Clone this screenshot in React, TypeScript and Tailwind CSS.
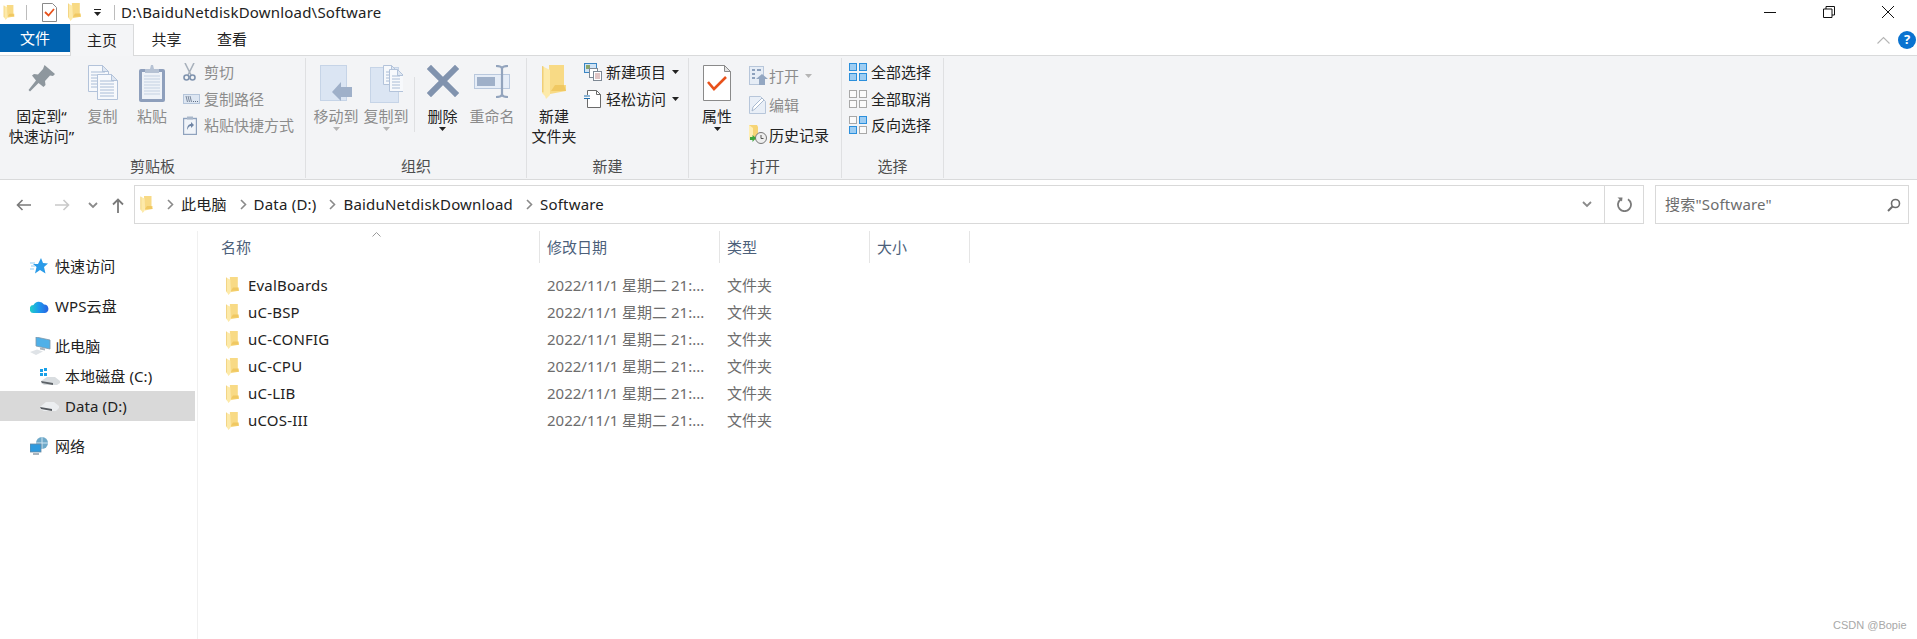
import React from "react";

const gray = "text-[#8c8c8c]";

function Folder({ w = 13, h = 16 }: { w?: number; h?: number }) {
  return (
    <svg width={w} height={h} viewBox="0 0 24 34" className="shrink-0">
      <path d="M7 0h15v20h2v6L8 29z" fill="#f8da85" />
      <path d="M13 20h9l2 6H9z" fill="#f0c862" />
      <path d="M0 1l8 4v25l-4 4-1-3-3-3z" fill="#fdeaa9" />
      <path d="M0 1l1.500 .5v26L0 27z" fill="#f0cf79" />
    </svg>
  );
}

function Pin() {
  return (
    <svg width="27" height="27" viewBox="0 0 27 27">
      <path d="M16.500 0l10.500 9-2 2-3-.5-5 5.500 .5 4-2 2-5-4-8.500 8.500-1.500-1.500 7.500-9.500-4-5 2-1.500 4 .5 5-5.500z" fill="#8e979e" />
    </svg>
  );
}

function Pages({ x = 0, y = 0, w = 20, h = 25 }: { x?: number; y?: number; w?: number; h?: number }) {
  const lines = [];
  for (let i = 7; i < h - 2; i += 3) lines.push(<path key={i} d={`M${x + 3} ${y + i}h${w - 6}`} stroke="#a9bcd6" />);
  return (
    <g>
      <path d={`M${x + 0.5} ${y + 0.5}h${w - 6}l6 6v${h - 7}h-${w}z`} fill="#f7f9fc" stroke="#b3c3da" />
      <path d={`M${x + w - 5.5} ${y + 0.5}v6h6z`} fill="#dfe7f2" stroke="#b3c3da" />
      {lines}
    </g>
  );
}

function CopyIcon() {
  return (
    <svg width="30" height="36" viewBox="0 0 30 36">
      <Pages x={0} y={0} w={20} h={27} />
      <Pages x={9} y={9} w={20} h={26} />
    </svg>
  );
}

function Clipboard() {
  return (
    <svg width="26" height="37" viewBox="0 0 26 37">
      <rect x="0" y="4" width="26" height="33" rx="2" fill="#8e9fbc" />
      <rect x="3" y="7" width="20" height="27" fill="#eef2f8" />
      <path d="M5 11h16M5 14h16M5 17h16M5 20h16M5 23h16M5 26h16M5 29h16" stroke="#c4d1e2" />
      <path d="M6 8V4h5l1-4h2l1 4h5v4z" fill="#b6c2d4" />
    </svg>
  );
}

function Scissors() {
  return (
    <svg width="13" height="18" viewBox="0 0 13 18" fill="none">
      <path d="M2 0l6 12M11 0L5 12" stroke="#a8b1bc" strokeWidth="1.6" />
      <circle cx="3.500" cy="14.500" r="2.500" stroke="#7f93ae" strokeWidth="1.6" />
      <circle cx="9.500" cy="14.500" r="2.500" stroke="#7f93ae" strokeWidth="1.6" />
    </svg>
  );
}

function PathBox() {
  return (
    <svg width="17" height="10" viewBox="0 0 17 10">
      <rect x="0.5" y="0.5" width="16" height="9" fill="#dde6f2" stroke="#b5c5da" />
      <path d="M3 2l1.500 6M5 2l1.500 6M7 2l1.500 6" stroke="#5f6f85" strokeWidth="0.8" />
      <path d="M10 7.500h1M12 7.500h1M14 7.500h1" stroke="#5f6f85" />
    </svg>
  );
}

function Shortcut() {
  return (
    <svg width="14" height="19" viewBox="0 0 14 19">
      <rect x="0.5" y="2.5" width="13" height="16" fill="#f0f4f9" stroke="#8fa2bd" strokeWidth="1.4" />
      <rect x="4" y="0.5" width="6" height="3" fill="#a9b7ca" />
      <path d="M4 14c0-4 2-6 4-6V6l3 3-3 3v-2c-2 0-3 2-4 4z" fill="#6f85a5" />
    </svg>
  );
}

function MoveTo() {
  return (
    <svg width="32" height="36" viewBox="0 0 32 36">
      <rect x="0.5" y="0.5" width="26" height="35" fill="#dbe5f3" stroke="#c6d4e7" />
      <path d="M12 27l9-10v5h11v10H21v4z" fill="#9fb0c9" />
    </svg>
  );
}

function CopyTo() {
  return (
    <svg width="33" height="38" viewBox="0 0 33 38">
      <rect x="0.5" y="2.5" width="28" height="35" fill="#dbe5f3" stroke="#c6d4e7" />
      <Pages x={13} y={0} w={14} h={20} />
      <Pages x={19} y={4} w={14} h={23} />
    </svg>
  );
}

function DeleteX() {
  return (
    <svg width="32" height="32" viewBox="0 0 32 32">
      <path d="M4 4l24 24M28 4L4 28" stroke="#8193ae" strokeWidth="6" strokeLinecap="square" />
    </svg>
  );
}

function Rename() {
  return (
    <svg width="36" height="33" viewBox="0 0 36 33" fill="none">
      <rect x="0.5" y="9.5" width="35" height="14" fill="#e6edf7" stroke="#b9c8dd" />
      <rect x="3" y="12" width="18" height="9" fill="#9fb0c9" />
      <path d="M22 1c4 0 6 1 6 3v25c0 2 2 3 6 3M34 1c-4 0-6 1-6 3v25c0 2-2 3-6 3" stroke="#93a4bd" strokeWidth="2.2" />
    </svg>
  );
}

function NewItem() {
  return (
    <svg width="18" height="18" viewBox="0 0 18 18">
      <rect x="0.5" y="0.5" width="12" height="9" fill="#cfe3f5" stroke="#3a86c4" />
      <rect x="2" y="2" width="4" height="4" fill="#8aa56c" />
      <rect x="5.5" y="5.5" width="8" height="9" fill="#fff" stroke="#7d8894" />
      <rect x="9.5" y="8.5" width="8" height="9" fill="#fff" stroke="#7d8894" />
      <path d="M11 11h5M11 13h5M11 15h5" stroke="#c28a8a" />
    </svg>
  );
}

function EasyAccess() {
  return (
    <svg width="17" height="18" viewBox="0 0 17 18" fill="none">
      <path d="M3.500 5V0.500h9l4 4v13h-13V9" fill="#fff" stroke="#6a6a6a" />
      <path d="M12.500 0.500v4h4" stroke="#6a6a6a" />
      <path d="M0 6h6M0 8.500h6" stroke="#1f6fae" strokeWidth="1.2" />
    </svg>
  );
}

function Properties() {
  return (
    <svg width="28" height="36" viewBox="0 0 28 36" fill="none">
      <path d="M0.500 0.500h21l6 6v29h-27z" fill="#fff" stroke="#8a8a8a" />
      <path d="M21.500 0.500v6h6z" fill="#e3e3e3" stroke="#8a8a8a" />
      <path d="M5 17l6 7L23 12" stroke="#e8511a" strokeWidth="2.6" />
    </svg>
  );
}

function OpenIcon() {
  return (
    <svg width="19" height="19" viewBox="0 0 19 19">
      <rect x="0.5" y="0.5" width="14" height="18" fill="#e6edf6" stroke="#b7c6da" />
      <path d="M3 4h3M3 8h3M3 12h3M8 4h4" stroke="#8da1bd" strokeWidth="2" />
      <path d="M13 8l6 5h-3v6h-6v-6H7z" fill="#93a7c2" />
    </svg>
  );
}

function EditIcon() {
  return (
    <svg width="17" height="18" viewBox="0 0 17 18" fill="none">
      <path d="M0.500 0.500h11l5 5v12h-16z" fill="#e9eff7" stroke="#b7c6da" />
      <path d="M3 15l1-4L13 2l2 2-9 9z" fill="#fff" stroke="#a9bad0" />
    </svg>
  );
}

function HistoryIcon() {
  return (
    <svg width="18" height="19" viewBox="0 0 18 19">
      <path d="M0 0h8l1 2v13H0z" fill="#f6d475" />
      <path d="M0 0l4 3v12H0z" fill="#ffeeb4" />
      <circle cx="12" cy="13" r="5.500" fill="#eee" stroke="#777" />
      <path d="M12 10v3.500h2.500" stroke="#555" fill="none" />
      <path d="M7 13l-3.500-3v2H1v3h2.500v2z" fill="#3da63d" />
    </svg>
  );
}

function Grid({ on }: { on: boolean[] }) {
  const cells = [
    [0, 0],
    [10, 0],
    [0, 10],
    [10, 10],
  ];
  return (
    <svg width="18" height="18" viewBox="0 0 18 18">
      {cells.map(([x, y], i) => (
        <rect
          key={i}
          x={x + 0.5}
          y={y + 0.5}
          width="7"
          height="7"
          fill={on[i] ? "#9dcdf3" : "#fbfbfb"}
          stroke={on[i] ? "#2b8fdc" : "#a8a8a8"}
        />
      ))}
    </svg>
  );
}

function Caret({ light = false, cls = "" }: { light?: boolean; cls?: string }) {
  return (
    <svg width="7" height="4" viewBox="0 0 7 4" className={cls}>
      <path d="M0 0h7L3.500 4z" fill={light ? "#b5b5b5" : "#222"} />
    </svg>
  );
}

function Large({
  w,
  icon,
  lines,
  dim = false,
  caret,
}: {
  w: string;
  icon: React.ReactNode;
  lines: string[];
  dim?: boolean;
  caret?: "dark" | "light";
}) {
  return (
    <div className={`${w} flex flex-col items-center shrink-0`}>
      <div className="h-[48px] pt-[7px] flex items-start justify-center">{icon}</div>
      {lines.map((l) => (
        <div key={l} className={`leading-[20px] whitespace-nowrap ${dim ? gray : "text-[#222]"}`}>
          {l}
        </div>
      ))}
      {caret && <Caret light={caret === "light"} cls="mt-[1px]" />}
    </div>
  );
}

function Small({
  icon,
  text,
  iw,
  h,
  dim = false,
  after,
}: {
  icon: React.ReactNode;
  text: string;
  iw: string;
  h: string;
  dim?: boolean;
  after?: React.ReactNode;
}) {
  return (
    <div className={`${h} flex items-center whitespace-nowrap`}>
      <div className={`${iw} shrink-0 flex items-center`}>{icon}</div>
      <span className={dim ? gray : "text-[#222]"}>{text}</span>
      {after}
    </div>
  );
}

function Group({ w, label, children }: { w: string; label: string; children: React.ReactNode }) {
  return (
    <div className={`${w} shrink-0 h-[120px] mt-[2px] border-r border-[#dfe0e2] flex flex-col`}>
      <div className="h-[98px] flex">{children}</div>
      <div className="leading-[20px] text-center text-[#4d4d4d]">{label}</div>
    </div>
  );
}

function Chevron({ cls = "" }: { cls?: string }) {
  return (
    <svg width="7" height="11" viewBox="0 0 7 11" className={`shrink-0 ${cls}`} fill="none">
      <path d="M1 1l4.500 4.500L1 10" stroke="#8a8a8a" strokeWidth="1.6" />
    </svg>
  );
}

function DownChev({ cls = "" }: { cls?: string }) {
  return (
    <svg width="10" height="7" viewBox="0 0 10 7" className={`shrink-0 ${cls}`} fill="none">
      <path d="M1 1l4 4 4-4" stroke="#8a8a8a" strokeWidth="1.8" />
    </svg>
  );
}

function NavArrow({ dir, color }: { dir: "l" | "r"; color: string }) {
  return (
    <svg width="15" height="12" viewBox="0 0 15 12" className="shrink-0" fill="none">
      <path
        d={dir === "l" ? "M15 6H1.500M6.500 1l-5 5 5 5" : "M0 6h13.500M8.500 1l5 5-5 5"}
        stroke={color}
        strokeWidth="1.6"
      />
    </svg>
  );
}

function Star() {
  return (
    <svg width="18" height="16" viewBox="0 0 18 16">
      <path d="M11 0l2 5 5 .5-4 3.500 1.500 6.500L10 12l-5 3.500L6.500 9 3 6h5z" fill="#2a9be8" />
      <path d="M0 5h5M1 8h4M0 11h4" stroke="#8fcdf5" />
    </svg>
  );
}

function Cloud() {
  return (
    <svg width="19" height="14" viewBox="0 0 19 14">
      <defs>
        <linearGradient id="cl" x1="0" y1="0" x2="1" y2="0">
          <stop offset="0" stopColor="#21d1c6" />
          <stop offset="0.5" stopColor="#1c97ee" />
          <stop offset="1" stopColor="#2a62e0" />
        </linearGradient>
      </defs>
      <path d="M4 14a4 4 0 0 1-.5-8A6 6 0 0 1 14 5.500 4.300 4.300 0 0 1 15 14z" fill="url(#cl)" />
    </svg>
  );
}

function PC() {
  return (
    <svg width="21" height="18" viewBox="0 0 21 18">
      <path d="M6 0l14 3v9L6 9z" fill="#4fb0e8" stroke="#7f97aa" strokeWidth="0.8" />
      <path d="M10 10.500l5 1v2l-5-1z" fill="#aab4bd" />
      <path d="M0 15l7-2.500 6 2-7 3.500z" fill="#dfe3e7" />
    </svg>
  );
}

function DriveC() {
  return (
    <svg width="20" height="17" viewBox="0 0 20 17">
      <path d="M0 1h3v3H0zM4 0h3v3H4zM0 5h3v3H0zM4 5h3v3H4z" fill="#19a0e8" />
      <path d="M1 13l6-4h8l5 4v2l-3 2H4l-3-2z" fill="#d9dde0" />
      <path d="M1 13l12 2v2L2 15z" fill="#5e6368" />
    </svg>
  );
}

function DriveD() {
  return (
    <svg width="19" height="10" viewBox="0 0 19 10">
      <path d="M0 6l6-5h8l5 4v2l-3 3H4L0 8z" fill="#eceef0" />
      <path d="M0 6l12 2v2L1 8z" fill="#55595e" />
    </svg>
  );
}

function Network() {
  return (
    <svg width="19" height="18" viewBox="0 0 19 18">
      <circle cx="12" cy="6" r="6" fill="#6fa9c9" />
      <path d="M12 0v12M6 6h12" stroke="#cfe5f2" />
      <rect x="0" y="7" width="11" height="8" fill="#2e9ade" stroke="#6d8aa0" strokeWidth="0.8" />
      <path d="M3 16h6v2H3z" fill="#a9b4bd" />
    </svg>
  );
}

function SideRow({
  icon,
  text,
  sub = false,
  sel = false,
  gap = false,
}: {
  icon: React.ReactNode;
  text: string;
  sub?: boolean;
  sel?: boolean;
  gap?: boolean;
}) {
  return (
    <div
      className={`h-[30px] flex items-center text-[#222] whitespace-nowrap tracking-[0.1px] ${
        sub ? "pl-[40px]" : "pl-[30px]"
      } ${sel ? "bg-[#d9d9d9]" : ""} ${gap ? "mt-[10px]" : ""}`}
    >
      <div className="w-[25px] shrink-0 flex items-center">{icon}</div>
      <span>{text}</span>
    </div>
  );
}

const files = ["EvalBoards", "uC-BSP", "uC-CONFIG", "uC-CPU", "uC-LIB", "uCOS-III"];

export default function App() {
  return (
    <div className="relative w-[1917px] h-[639px] overflow-hidden bg-white text-[15px] font-['Noto_Sans','Noto_Sans_CJK_SC',sans-serif]">
      {/* title bar */}
      <div className="h-[24px] flex items-center">
        <div className="ml-[3px] w-[12px] flex">
          <Folder w={12} h={15} />
        </div>
        <div className="ml-[11px] w-px h-[15px] bg-[#bcbcbc]" />
        <svg width="15" height="19" viewBox="0 0 15 19" className="ml-[15px]" fill="none">
          <path d="M0.500 0.500h10l4 4v14H0.500z" fill="#fff" stroke="#8a8a8a" />
          <path d="M3 9l3.500 3.500L12 6" stroke="#e8511a" strokeWidth="1.8" />
        </svg>
        <div className="ml-[11px]">
          <Folder w={13} h={18} />
        </div>
        <div className="ml-[13px] flex flex-col items-center gap-[2px]">
          <div className="w-[7px] h-px bg-[#222]" />
          <Caret />
        </div>
        <div className="ml-[13px] w-px h-[15px] bg-[#bcbcbc]" />
        <div className="ml-[6px] text-[#222] whitespace-nowrap tracking-[0.2px]">
          D:\BaiduNetdiskDownload\Software
        </div>
        <div className="ml-auto flex items-center">
          <svg width="12" height="1" viewBox="0 0 12 1" className="mr-[47px]">
            <path d="M0 .5h12" stroke="#111" />
          </svg>
          <svg width="12" height="12" viewBox="0 0 12 12" className="mr-[47px]" fill="none">
            <path d="M0.500 3h8.500v8.500H0.500zM3 3V0.500h8.500V9H9" stroke="#111" />
          </svg>
          <svg width="12" height="12" viewBox="0 0 12 12" className="mr-[23px]" fill="none">
            <path d="M0 0l12 12M12 0L0 12" stroke="#111" />
          </svg>
        </div>
      </div>

      {/* tabs */}
      <div className="h-[32px] flex border-b border-[#d9dadb]">
        <div className="w-[70px] h-[28px] mr-0 bg-[#0063b1] text-white flex items-center justify-center">文件</div>
        <div className="w-[64px] h-[32px] bg-[#f4f5f7] border border-b-0 border-[#d9dadb] flex items-center justify-center text-[#222]">
          主页
        </div>
        <div className="w-[65px] flex items-center justify-center h-[31px] text-[#222]">共享</div>
        <div className="w-[66px] flex items-center justify-center h-[31px] text-[#222]">查看</div>
        <div className="ml-auto flex items-center h-[31px]">
          <svg width="13" height="8" viewBox="0 0 13 8" fill="none" className="mr-[8px]">
            <path d="M0.500 7.500l6-6 6 6" stroke="#b5b5b5" strokeWidth="1.1" />
          </svg>
          <div className="w-[18px] h-[18px] mr-px rounded-full bg-[#0a73d0] text-white text-[13px] font-bold flex items-center justify-center">
            ?
          </div>
        </div>
      </div>

      {/* ribbon */}
      <div className="h-[124px] bg-[#f3f4f6] border-b border-[#d9dadb] flex">
        <Group w="w-[306px]" label="剪贴板">
          <Large w="w-[83px]" icon={<Pin />} lines={["固定到“", "快速访问”"]} />
          <Large w="w-[39px]" icon={<CopyIcon />} lines={["复制"]} dim />
          <Large w="w-[60px]" icon={<Clipboard />} lines={["粘贴"]} dim />
          <div className="ml-[1px] pt-[1px]">
            <Small h="h-[26.5px]" iw="w-[21px]" icon={<Scissors />} text="剪切" dim />
            <Small h="h-[26.5px]" iw="w-[21px]" icon={<PathBox />} text="复制路径" dim />
            <Small h="h-[26.5px]" iw="w-[21px]" icon={<Shortcut />} text="粘贴快捷方式" dim />
          </div>
        </Group>
        <Group w="w-[221px]" label="组织">
          <Large w="w-[60px]" icon={<MoveTo />} lines={["移动到"]} dim caret="light" />
          <Large w="w-[40px]" icon={<CopyTo />} lines={["复制到"]} dim caret="light" />
          <div className="ml-[8px] mt-[19px] w-px h-[55px] bg-[#dfe0e2]" />
          <Large w="w-[55px]" icon={<DeleteX />} lines={["删除"]} caret="dark" />
          <Large w="w-[44px]" icon={<Rename />} lines={["重命名"]} dim />
        </Group>
        <Group w="w-[162px]" label="新建">
          <Large w="w-[54px]" icon={<Folder w={24} h={34} />} lines={["新建", "文件夹"]} />
          <div className="ml-[3px] pt-[1px]">
            <Small h="h-[26.5px]" iw="w-[22px]" icon={<NewItem />} text="新建项目" after={<Caret cls="ml-[6px]" />} />
            <Small h="h-[26.5px]" iw="w-[22px]" icon={<EasyAccess />} text="轻松访问" after={<Caret cls="ml-[6px]" />} />
          </div>
        </Group>
        <Group w="w-[153px]" label="打开">
          <Large w="w-[56px]" icon={<Properties />} lines={["属性"]} caret="dark" />
          <div className="ml-[4px] pt-[3px]">
            <Small h="h-[29.5px]" iw="w-[20px]" icon={<OpenIcon />} text="打开" dim after={<Caret light cls="ml-[6px]" />} />
            <Small h="h-[29.5px]" iw="w-[20px]" icon={<EditIcon />} text="编辑" dim />
            <Small h="h-[29.5px]" iw="w-[20px]" icon={<HistoryIcon />} text="历史记录" />
          </div>
        </Group>
        <Group w="w-[102px]" label="选择">
          <div className="ml-[7px] pt-[1px]">
            <Small h="h-[26.5px]" iw="w-[22px]" icon={<Grid on={[true, true, true, true]} />} text="全部选择" />
            <Small h="h-[26.5px]" iw="w-[22px]" icon={<Grid on={[false, false, false, false]} />} text="全部取消" />
            <Small h="h-[26.5px]" iw="w-[22px]" icon={<Grid on={[false, true, true, false]} />} text="反向选择" />
          </div>
        </Group>
      </div>

      {/* address row */}
      <div className="h-[46px] flex items-start">
        <div className="w-[134px] h-[50px] flex items-center shrink-0">
          <div className="ml-[16px]">
            <NavArrow dir="l" color="#7a7a7a" />
          </div>
          <div className="ml-[24px]">
            <NavArrow dir="r" color="#c9c9c9" />
          </div>
          <DownChev cls="ml-[18px]" />
          <svg width="12" height="15" viewBox="0 0 12 15" className="ml-[14px]" fill="none">
            <path d="M6 15V1.500M1 6.500l5-5 5 5" stroke="#7a7a7a" strokeWidth="1.8" />
          </svg>
        </div>
        <div className="mt-[5px] w-[1510px] h-[39px] border border-[#d9d9d9] flex items-center text-[#222] shrink-0">
          <div className="ml-[5px]">
            <Folder w={13} h={17} />
          </div>
          <Chevron cls="ml-[14px]" />
          <span className="ml-[7px] tracking-[0.2px]">此电脑</span>
          <Chevron cls="ml-[13px]" />
          <span className="ml-[7px] tracking-[0.2px]">Data (D:)</span>
          <Chevron cls="ml-[13px]" />
          <span className="ml-[7px] tracking-[0.2px]">BaiduNetdiskDownload</span>
          <Chevron cls="ml-[13px]" />
          <span className="ml-[7px] tracking-[0.2px]">Software</span>
          <DownChev cls="ml-auto mr-[12px]" />
          <div className="w-[39px] h-full border-l border-[#d9d9d9] flex items-center justify-center">
            <svg width="15" height="15" viewBox="0 0 15 15" fill="none">
              <path d="M4 2.200A6.500 6.500 0 1 0 11 2.200" stroke="#7a7a7a" strokeWidth="1.8" />
              <path d="M0.500 0.500L5.500 0.500 5 4.500z" fill="#7a7a7a" />
            </svg>
          </div>
        </div>
        <div className="ml-[11px] mt-[5px] w-[254px] h-[39px] border border-[#d9d9d9] flex items-center text-[#6d6d6d] shrink-0">
          <span className="ml-[9px] tracking-[0.2px]">搜索"Software"</span>
          <svg width="14" height="14" viewBox="0 0 14 14" className="ml-auto mr-[7px]" fill="none">
            <circle cx="8.500" cy="5.500" r="4" stroke="#6d6d6d" strokeWidth="1.6" />
            <path d="M5.500 8.500L1 13" stroke="#6d6d6d" strokeWidth="2" />
          </svg>
        </div>
      </div>

      {/* main */}
      <div className="flex h-[413px]">
        <div className="w-[198px] shrink-0 pt-[20px] pr-[2px] border-r border-[#f0f0f0] mt-[5px] box-border">
          <SideRow icon={<Star />} text="快速访问" />
          <SideRow icon={<Cloud />} text="WPS云盘" gap />
          <SideRow icon={<PC />} text="此电脑" gap />
          <SideRow icon={<DriveC />} text="本地磁盘 (C:)" sub />
          <SideRow icon={<DriveD />} text="Data (D:)" sub sel />
          <SideRow icon={<Network />} text="网络" gap />
        </div>
        <div className="flex-1 pt-[5px]">
          <div className="flex h-[32px] text-[#4c607a]">
            <div className="relative w-[342px] pl-[23px] flex items-center border-r border-[#e5e5e5]">
              名称
              <svg width="9" height="5" viewBox="0 0 9 5" className="absolute left-[174px] top-[1px]" fill="none">
                <path d="M0.500 4.500l4-4 4 4" stroke="#9a9a9a" />
              </svg>
            </div>
            <div className="w-[180px] pl-[7px] flex items-center border-r border-[#e5e5e5]">修改日期</div>
            <div className="w-[150px] pl-[7px] flex items-center border-r border-[#e5e5e5]">类型</div>
            <div className="w-[100px] pl-[7px] flex items-center border-r border-[#e5e5e5]">大小</div>
          </div>
          <div className="mt-[9px]">
            {files.map((f) => (
              <div key={f} className="h-[27px] flex items-center">
                <div className="w-[342px] pl-[28px] flex items-center text-[#222] tracking-[0.2px]">
                  <Folder w={13} h={18} />
                  <span className="ml-[9px]">{f}</span>
                </div>
                <div className="w-[180px] pl-[7px] text-[#6d6d6d] whitespace-nowrap">2022/11/1 星期二 21:...</div>
                <div className="w-[150px] pl-[7px] text-[#6d6d6d]">文件夹</div>
              </div>
            ))}
          </div>
        </div>
      </div>

      <div className="absolute left-[1833px] top-[618px] text-[11px] leading-[14px] text-[#a8a8a8] font-['Liberation_Sans',sans-serif]">
        CSDN @Bopie
      </div>
    </div>
  );
}
